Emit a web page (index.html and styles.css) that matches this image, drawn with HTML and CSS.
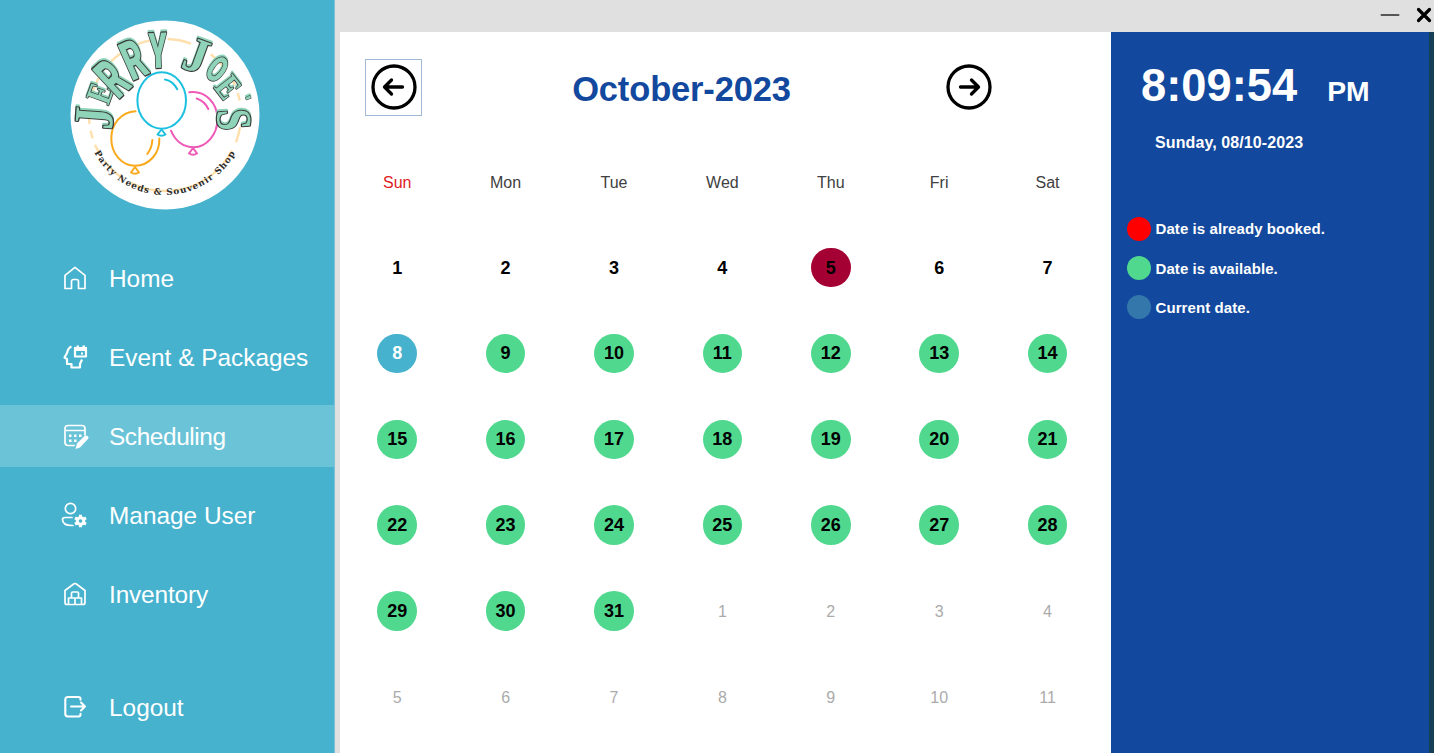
FILE: index.html
```
<!DOCTYPE html>
<html lang="en">
<head>
<meta charset="utf-8">
<title>Scheduling</title>
<link rel="stylesheet" href="styles.css">
</head>
<body>
<div class="app">
  <aside class="sidebar">
    <svg class="logo" viewBox="60 10 210 210">
      <defs><path id="lower-arc" d="M85 115A80 80 0 0 0 245 115"/></defs>
      <circle cx="165" cy="115" r="94.5" fill="#fff"/>
      <circle class="dashes" cx="165" cy="115" r="76" pathLength="360"/>
      <g class="balloons">
        <g stroke="#1bc0e0">
          <ellipse cx="161.7" cy="100.5" rx="24.3" ry="28.2"/>
          <path d="M165 79.5Q173 81 177.3 89.3M161.500 129.500L157.500 134.500Q161.500 137 165.500 134.500Z"/>
        </g>
        <g stroke="#ee58b6">
          <path d="M189.300 92.300C205 90 217.500 103 217.500 119C217.500 135 206 147.300 194 147.300C183 147.300 175 140.500 171 130.700"/>
          <path d="M196.700 98.500Q204.500 101 208.300 109M193 148L189 153.500Q193 156 197 153.500Z"/>
        </g>
        <g stroke="#f9a91b">
          <path d="M135.500 111.200C121 112 111.300 124 111.300 138.500C111.300 154 122 165.800 135 165.800C149 165.800 160 153.500 159.300 138.500"/>
          <path d="M152.300 140Q152 148 147.300 154M135 167L131 172.500Q135 175 139 172.500Z"/>
        </g>
      </g>
      <g class="name">
        <text class="slab" y="13" transform="translate(92.500 118) rotate(-86) scale(1.200 1.550)">J</text>
        <text class="slab" y="13" transform="translate(99 93) rotate(-70) scale(.75 1)">E</text>
        <text class="thick" y="13" transform="translate(111 77) rotate(-43) scale(.95 1.650)">R</text>
        <text class="thick" y="13" transform="translate(133 58) rotate(-24) scale(.95 1.600)">R</text>
        <text class="thick" y="13" transform="translate(158 49) rotate(-2) scale(.85 1.450)">Y</text>
        <text class="slab" y="13" transform="translate(197 54) rotate(20) scale(1.300 1.380)">J</text>
        <text y="13" transform="translate(217.500 69) rotate(36) scale(.68 1)">O</text>
        <text class="slab" y="13" transform="translate(229 86.500) rotate(52) scale(.75 1)">E</text>
        <text y="13" transform="translate(244 99.500) rotate(66) scale(.6 .5)">'</text>
        <text class="slab" y="13" transform="translate(235.500 119.500) rotate(86) scale(1.050 1.380)">S</text>
      </g>
      <text class="tagline"><textPath href="#lower-arc" startOffset="39" textLength="172">Party Needs &amp; Souvenir Shop</textPath></text>
    </svg>
    <nav class="nav">
      <a class="item">
        <svg class="icon" viewBox="0 0 28 28"><path d="M4 11.300L14 3.300L24 11.300V24.500H17.500V17.500Q17.500 15.500 15.500 15.500H12.500Q10.500 15.500 10.500 17.500V24.500H4Z"/></svg>
        <span>Home</span>
      </a>
      <a class="item">
        <svg class="icon" viewBox="0 0 28 28"><path stroke-width="2.200" stroke-linecap="butt" d="M10.500 3.500Q7 5 6 10L3.500 14.500L6 16V21H10.500V24.500H19V21L21 16.500"/><path stroke-width="2.200" d="M14 5.500H25V13.500H14Z"/><path class="solid" d="M13 4H15.500V2.500H18V4H21.500V2.500H24V4H26V8H13ZM20 9.500H22V11.500H20Z"/></svg>
        <span>Event &amp; Packages</span>
      </a>
      <a class="item active">
        <svg class="icon" viewBox="0 0 28 28"><path d="M13 23.500H7Q4 23.500 4 20.500V6.500Q4 3.500 7 3.500H21Q24 3.500 24 6.500V13M4 8.500H24"/><path class="solid" d="M8 12.500H10.500V15H8ZM13 12.500H15.500V15H13ZM18 12.500H20.500V15H18ZM8 17.500H10.500V20H8ZM13 17.500H15.500V20H13ZM14.500 27L16 21.500L23.500 14Q26 12.500 27.500 15Q27.500 16.500 26.500 17.500L19 25.500Z"/></svg>
        <span class="narrow">Scheduling</span>
      </a>
      <a class="item">
        <svg class="icon" viewBox="0 0 28 28"><circle cx="9.500" cy="7.500" r="5.200"/><path d="M11 16.500H4.500Q1.500 16.500 1.500 18.500Q1.500 24.500 11 24.500H12"/><circle cx="19.500" cy="20" r="3.300" stroke-width="3"/><path stroke-width="3" stroke-linecap="butt" d="M19.500 13.800V17M19.500 23V26.200M14 16.900L17 18.500M22 21.500L25 23.100M14 23.100L17 21.500M22 18.500L25 16.900"/></svg>
        <span>Manage User</span>
      </a>
      <a class="item">
        <svg class="icon" viewBox="0 0 28 28"><path d="M6 24.500Q4 24.500 4 22.500V10.500L13 3.800Q14 3.200 15 3.800L24 10.500V22.500Q24 24.500 22 24.500Z"/><path d="M7.500 24V18H20.500V24M14 18V24M10.500 18V13Q10.500 12 11.500 12H16.500Q17.500 12 17.500 13V18"/></svg>
        <span class="snug">Inventory</span>
      </a>
      <a class="item logout">
        <svg class="icon" viewBox="0 0 28 28"><path stroke-width="2.100" d="M19.500 6.800V6Q19.500 4 17.500 4H7Q4.300 4 4.300 6.500V21Q4.300 23.500 7 23.500H17.500Q19.500 23.500 19.500 21.500V20.700M10 13.500H24M20 9.500L24 13.500L20 17.500"/></svg>
        <span>Logout</span>
      </a>
    </nav>
  </aside>
  <div class="workspace">
    <header class="titlebar">
      <svg class="minimize" viewBox="0 0 20 20"><path d="M1.500 10H18.500" stroke="#555" stroke-width="2" stroke-linecap="round"/></svg>
      <svg class="close" viewBox="0 0 16 16"><path d="M2.500 2.500L13.500 13.500M13.500 2.500L2.500 13.500" stroke="#000" stroke-width="3.200" stroke-linecap="round"/></svg>
    </header>
    <div class="content">
      <main class="calendar">
        <div class="month">
          <button class="arrow focused" aria-label="Previous month"><svg viewBox="0 0 46 46"><circle cx="23" cy="23" r="21"/><path d="M31.500 23H14M20.500 16L13.500 23L20.500 30"/></svg></button>
          <h1>October-2023</h1>
          <button class="arrow" aria-label="Next month"><svg viewBox="0 0 46 46"><circle cx="23" cy="23" r="21"/><path d="M14.500 23H32M25.500 16L32.500 23L25.500 30"/></svg></button>
        </div>
        <div class="grid">
          <div class="head sun">Sun</div><div class="head">Mon</div><div class="head">Tue</div><div class="head">Wed</div><div class="head">Thu</div><div class="head">Fri</div><div class="head">Sat</div>
          <div class="day">1</div><div class="day">2</div><div class="day">3</div><div class="day">4</div><div class="day booked">5</div><div class="day">6</div><div class="day">7</div>
          <div class="day today">8</div><div class="day free">9</div><div class="day free">10</div><div class="day free">11</div><div class="day free">12</div><div class="day free">13</div><div class="day free">14</div>
          <div class="day free">15</div><div class="day free">16</div><div class="day free">17</div><div class="day free">18</div><div class="day free">19</div><div class="day free">20</div><div class="day free">21</div>
          <div class="day free">22</div><div class="day free">23</div><div class="day free">24</div><div class="day free">25</div><div class="day free">26</div><div class="day free">27</div><div class="day free">28</div>
          <div class="day free">29</div><div class="day free">30</div><div class="day free">31</div><div class="day other">1</div><div class="day other">2</div><div class="day other">3</div><div class="day other">4</div>
          <div class="day other">5</div><div class="day other">6</div><div class="day other">7</div><div class="day other">8</div><div class="day other">9</div><div class="day other">10</div><div class="day other">11</div>
        </div>
      </main>
      <section class="status">
        <div class="clock"><span class="time">8:09:54</span><span class="period">PM</span></div>
        <div class="date">Sunday, 08/10-2023</div>
        <ul class="legend">
          <li><i class="dot red"></i>Date is already booked.</li>
          <li><i class="dot green"></i>Date is available.</li>
          <li><i class="dot blue"></i>Current date.</li>
        </ul>
      </section>
    </div>
  </div>
</div>
</body>
</html>
```
FILE: styles.css
```
* { box-sizing: border-box; }

body {
  margin: 0;
  font-family: "Liberation Sans", Arial, sans-serif;
}

.app {
  display: flex;
  width: 1434px;
  height: 753px;
  overflow: hidden;
  background: #e0e0e0;
}

/* Sidebar */
.sidebar {
  width: 335px;
  flex: none;
  padding-top: 10px;
  background: #46b2ce;
  border-right: 1px solid #7cc3d5;
}

.logo {
  display: block;
  width: 210px;
  height: 210px;
  margin-left: 60px;
}

.dashes {
  fill: none;
  stroke: #ffe0ad;
  stroke-width: 2.4;
  stroke-dasharray: 0 9 12 7 12 5 40 3 30 5 20 5 9 5 6 5 10 10 16 12 15 8 20 8 18 17 12 10 8 6 6 11;
}

.balloons {
  fill: none;
  stroke-width: 2;
  stroke-linecap: round;
  stroke-linejoin: round;
}

/* Green letters with a dark outline and an offset green edge */
.name {
  font-family: Roboto, "Liberation Sans", sans-serif;
  font-size: 36px;
  font-weight: 900;
  text-anchor: middle;
  fill: #8fd3b9;
  stroke: #3a3a3a;
  stroke-width: 1.7;
  stroke-linejoin: round;
  paint-order: stroke;
  filter: drop-shadow(0 -2px 0 #8fd3b9);
}

.name .slab { font-family: "Liberation Serif", serif; font-weight: bold; }
.name .thick { font-size: 34px; }

.tagline {
  font-family: "DejaVu Serif", serif;
  font-size: 8.8px;
  font-weight: bold;
  fill: #2c2c2c;
}

.nav {
  display: flex;
  flex-direction: column;
  gap: 17px;
  padding-top: 27px;
}

.item {
  display: flex;
  align-items: center;
  height: 62px;
  padding-left: 61px;
  gap: 20px;
  color: #fff;
  font-size: 24.4px;
}

.item span { padding-top: 1px; }
.item .narrow { letter-spacing: -.4px; }
.item .snug { letter-spacing: -.15px; }
.item.active { background: #6bc3d8; }
.item.logout { margin-top: 34px; }

.icon {
  width: 28px;
  height: 28px;
  fill: none;
  stroke: #fff;
  stroke-width: 1.7;
  stroke-linejoin: round;
  stroke-linecap: round;
}

.icon .solid { fill: #fff; stroke: none; }

/* Window */
.workspace {
  flex: 1;
  display: flex;
  flex-direction: column;
}

.titlebar {
  height: 32px;
  display: flex;
  justify-content: flex-end;
  align-items: center;
  gap: 16px;
  padding-right: 2px;
  padding-bottom: 2px;
}

.minimize { width: 20px; height: 20px; }
.close { width: 16px; height: 16px; }

.content {
  flex: 1;
  display: flex;
  padding-left: 5px;
}

/* Calendar */
.calendar {
  width: 771px;
  background: #fff;
}

.month {
  display: flex;
  align-items: center;
  justify-content: space-between;
  height: 107px;
  padding: 3px 114px 0 25px;
}

.month h1 {
  margin: 3px 0 0 1px;
  font-size: 34.5px;
  line-height: 40px;
  letter-spacing: -.15px;
  color: #12489d;
}

.arrow {
  width: 57px;
  height: 57px;
  padding: 4px 5px;
  border: 1px solid transparent;
  background: none;
}

.arrow.focused { border-color: #a0b8d4; }

.arrow svg {
  display: block;
  width: 46px;
  height: 46px;
  fill: none;
  stroke: #000;
  stroke-width: 3.3;
  stroke-linecap: round;
  stroke-linejoin: round;
}

.grid {
  display: grid;
  grid-template-columns: repeat(7, 108.4px);
  grid-template-rows: repeat(7, 85.8px);
  place-items: center;
  padding-left: 3px;
}

.head { padding-top: 2px; font-size: 16px; color: #404040; }
.head.sun { color: #e01b24; }

.day {
  display: flex;
  align-items: center;
  justify-content: center;
  width: 39.5px;
  height: 39.5px;
  padding-top: 1px;
  border-radius: 50%;
  font-size: 18px;
  font-weight: bold;
  color: #000;
}

.day.booked { background: #a50034; }
.day.today { background: #46b2ce; color: #fff; }
.day.free { background: #51d88f; }
.day.other { padding-top: 2px; font-size: 16px; font-weight: normal; color: #ababab; }

/* Status panel */
.status {
  flex: 1;
  padding: 25px 0 0 16px;
  background: #12489d;
  border-right: 5px solid #153f55;
  color: #fff;
  font-weight: bold;
}

.clock {
  display: flex;
  align-items: baseline;
  gap: 30px;
  padding-left: 14px;
}

.time { font-size: 45.3px; line-height: 58px; }
.period { font-size: 28.3px; }

.date {
  padding-left: 28px;
  margin-top: 18px;
  font-size: 16px;
  line-height: 20px;
  letter-spacing: .1px;
}

.legend {
  list-style: none;
  margin: 56px 0 0;
  padding: 0;
}

.legend li {
  display: flex;
  align-items: center;
  gap: 4.5px;
  height: 39.4px;
  font-size: 15px;
  letter-spacing: .08px;
}

.dot { width: 24px; height: 24px; border-radius: 50%; }
.red { background: #f00; }
.green { background: #51d88f; }
.blue { background: #3477aa; }
```
